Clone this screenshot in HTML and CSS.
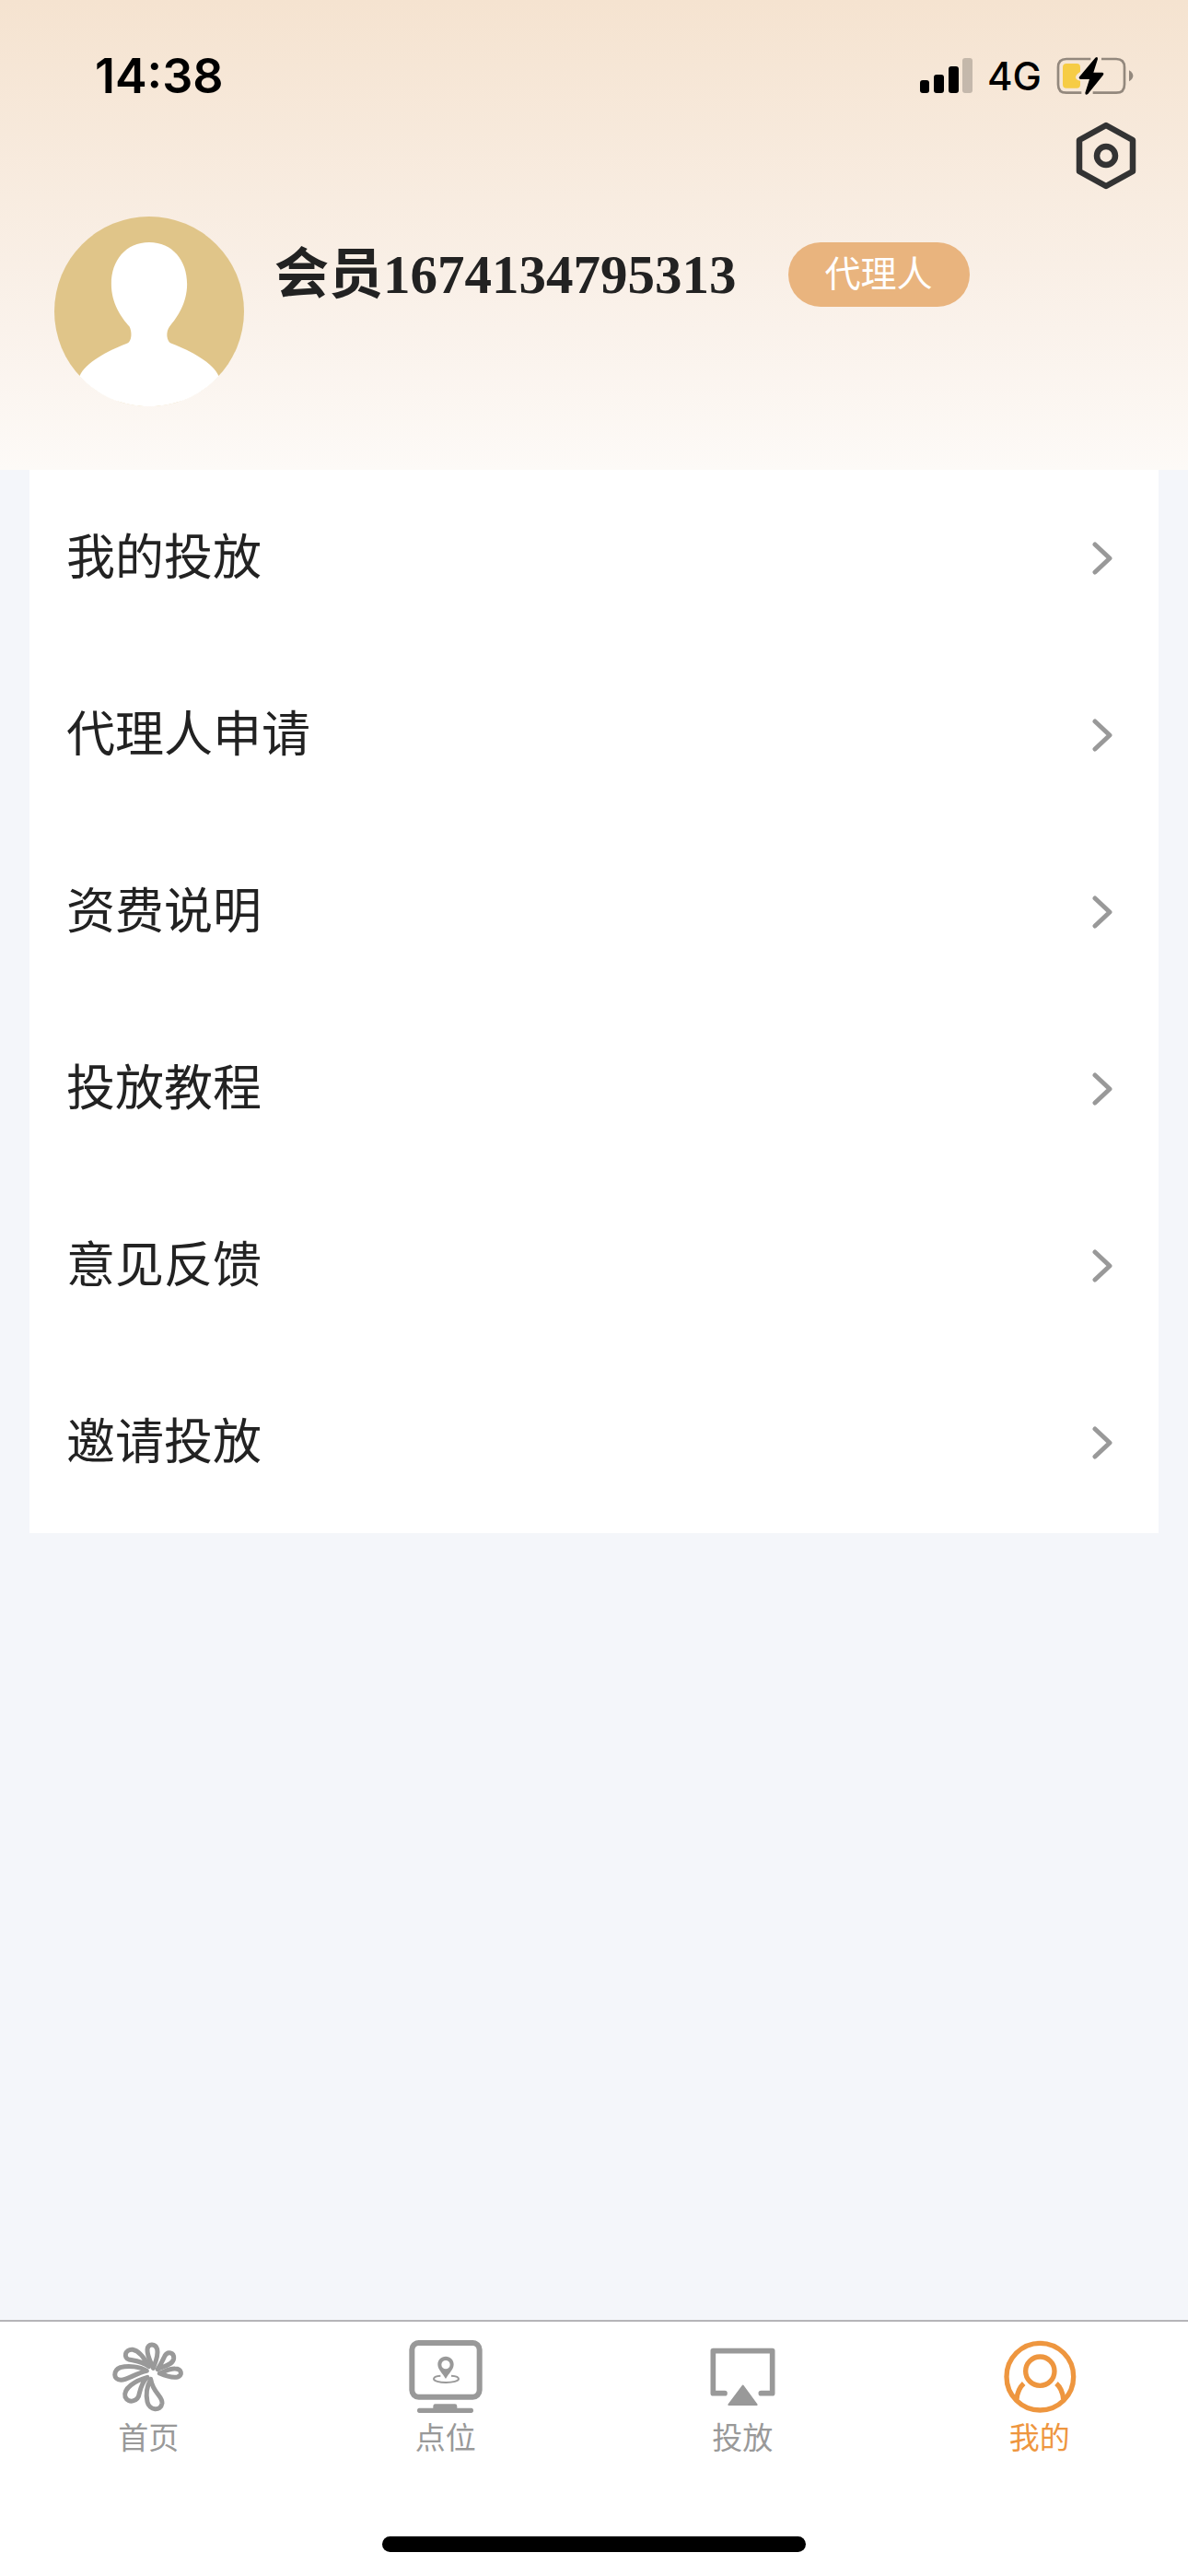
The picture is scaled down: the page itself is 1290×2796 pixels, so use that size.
FILE: index.html
```html
<!DOCTYPE html>
<html lang="zh-CN">
<head>
<meta charset="utf-8">
<meta name="viewport" content="width=device-width, initial-scale=1">
<title>我的</title>
<link rel="stylesheet" href="styles.css">
</head>
<body>
<header class="header">
  <div class="status">
    <time class="status-time">14:38</time>
    <div class="status-right">
      <svg class="signal" viewBox="0 0 57 38" aria-hidden="true">
        <rect x="0" y="24" width="10" height="14" rx="3"/>
        <rect x="15" y="18" width="11" height="20" rx="3"/>
        <rect x="31" y="9" width="11" height="29" rx="3"/>
        <rect x="46" y="0" width="11" height="38" rx="3" opacity=".2"/>
      </svg>
      <span class="network">4G</span>
      <svg class="battery" viewBox="501 61 252 126" aria-hidden="true">
        <path d="M613 70H534Q507 70 507 97V153Q507 180 534 180H583M648 70H696Q723 70 723 97V153Q723 180 696 180H620" fill="none" stroke="#93887d" stroke-width="8"/>
        <path d="M738 107Q751 114 751 125T738 143Z" fill="#93887d"/>
        <path d="M534 85H568Q579 85 579 97V112Q564 120 564 131Q566 140 579 141V153Q579 165 568 165H534Q522 165 522 153V97Q522 85 534 85Z" fill="#f6cc45"/>
        <path d="M628 66Q636 60 636 70L622 114H651Q658 116 653 123L604 184Q595 190 595 180L609 136H579Q572 133 577 127Z"/>
      </svg>
    </div>
  </div>
  <div class="toolbar">
    <button class="settings" type="button" aria-label="设置">
      <svg viewBox="0 0 66 74" fill="none" stroke="#333" stroke-width="6.5" stroke-linejoin="round" aria-hidden="true">
        <path d="M33 4L62 20V54L33 70L4 54V20Z"/>
        <circle cx="33" cy="37" r="10"/>
      </svg>
    </button>
  </div>
  <div class="profile">
    <svg class="avatar" viewBox="56 45 616 616" role="img" aria-label="头像">
      <circle cx="364" cy="353" r="308" fill="#e0c589"/>
      <path d="M364 129C440 129 487 188 487 264C487 325 456 372 430 402C418 418 418 450 438 458C500 482 572 520 590 563C534 625 455 661 364 661S194 625 138 563C156 520 228 482 290 458C310 450 308 418 300 402C272 372 241 325 241 264C241 188 288 129 364 129Z" fill="#fff"/>
    </svg>
    <div class="identity">
      <h1 class="name">会员1674134795313</h1>
      <span class="badge">代理人</span>
    </div>
  </div>
</header>

<main class="main">
  <nav class="menu" aria-label="菜单">
    <a class="menu-item" href="#placements">我的投放<svg class="chevron" viewBox="0 0 22 36" aria-hidden="true"><path d="M3 3L19 18L3 33"/></svg></a>
    <a class="menu-item" href="#apply">代理人申请<svg class="chevron" viewBox="0 0 22 36" aria-hidden="true"><path d="M3 3L19 18L3 33"/></svg></a>
    <a class="menu-item" href="#fees">资费说明<svg class="chevron" viewBox="0 0 22 36" aria-hidden="true"><path d="M3 3L19 18L3 33"/></svg></a>
    <a class="menu-item" href="#tutorial">投放教程<svg class="chevron" viewBox="0 0 22 36" aria-hidden="true"><path d="M3 3L19 18L3 33"/></svg></a>
    <a class="menu-item" href="#feedback">意见反馈<svg class="chevron" viewBox="0 0 22 36" aria-hidden="true"><path d="M3 3L19 18L3 33"/></svg></a>
    <a class="menu-item" href="#invite">邀请投放<svg class="chevron" viewBox="0 0 22 36" aria-hidden="true"><path d="M3 3L19 18L3 33"/></svg></a>
  </nav>
</main>

<footer class="footer">
  <nav class="tabs" aria-label="主导航">
    <a class="tab" href="#home">
      <svg class="tab-icon" viewBox="93 117 240 240" fill="none" stroke="currentColor" stroke-width="15" stroke-linejoin="round" aria-hidden="true">
        <path d="M229 208C222 190 209 170 210 147C211 128 236 126 242 146C247 168 236 190 229 208Z"/>
        <path d="M243 212C252 200 260 182 267 168C276 152 297 156 296 176C294 198 262 202 243 212Z"/>
        <path d="M250 225C266 220 280 209 300 210C322 210 326 232 308 237C288 241 266 232 250 225Z"/>
        <path d="M221 244C210 264 204 290 210 318C216 346 254 350 258 322C260 300 228 288 221 244Z"/>
        <path d="M210 238C196 250 190 264 184 290C180 318 148 324 138 302C130 274 172 248 210 238Z"/>
        <path d="M208 217C188 204 150 198 122 206C98 216 98 246 124 247C146 246 172 225 208 217Z"/>
        <path d="M215 203C206 186 186 152 162 148C136 146 132 176 150 180C172 184 194 186 215 203Z"/>
      </svg>
      首页
    </a>
    <a class="tab" href="#points">
      <svg class="tab-icon" viewBox="101 117 240 240" fill="none" stroke="currentColor" aria-hidden="true">
        <rect x="111" y="126" width="220" height="176" rx="22" stroke-width="18"/>
        <path d="M180 338V332Q180 325 187 325H251Q258 325 258 332V338H304Q311 338 311 346T304 354H135Q128 354 128 346T135 338Z" fill="currentColor" stroke="none"/>
        <path d="M221 170C206 170 195 181 195 196C195 213 210 224 221 243C232 224 247 213 247 196C247 181 236 170 221 170ZM221 183A14 14 0 1 1 221 211A14 14 0 1 1 221 183Z" fill="currentColor" fill-rule="evenodd" stroke="none"/>
        <path d="M204 233C188 234 182 238 182 243C182 250 200 255 222 255S263 250 263 243C263 238 256 234 239 233" stroke-width="6"/>
      </svg>
      点位
    </a>
    <a class="tab" href="#cast">
      <svg class="tab-icon" viewBox="109 117 240 240" fill="none" stroke="currentColor" stroke-linecap="round" stroke-linejoin="round" aria-hidden="true">
        <path d="M172 290H134V152H327V290H290" stroke-width="17"/>
        <path d="M231 266L276 327H185Z" fill="currentColor" stroke-width="6"/>
      </svg>
      投放
    </a>
    <a class="tab tab-active" href="#me" aria-current="page">
      <svg class="tab-icon" viewBox="118 117 240 240" fill="none" stroke="currentColor" stroke-width="16" aria-hidden="true">
        <circle cx="239" cy="236" r="109"/>
        <circle cx="239" cy="218" r="47"/>
        <path d="M186 258Q166 276 163 309M292 258Q312 276 315 309"/>
      </svg>
      我的
    </a>
  </nav>
  <div class="home-bar"></div>
</footer>
</body>
</html>
```
FILE: styles.css
```css
* {
  box-sizing: border-box;
}

body {
  display: flex;
  flex-direction: column;
  min-height: 100vh;
  margin: 0;
  background: #f4f6fa;
  color: #222;
  font-family: "Liberation Sans", "Noto Sans CJK SC", sans-serif;
}

svg {
  display: block;
}

a {
  color: inherit;
  text-decoration: none;
}

.header {
  padding-bottom: 69px;
  background: linear-gradient(#f5e3d0, #faf2eb 70%, #fdfaf7);
}

.status {
  display: flex;
  align-items: center;
  justify-content: space-between;
  height: 132px;
  padding: 32px 59px 0 103px;
  color: #000;
  font-family: Inter, sans-serif;
}

.status-time {
  font-size: 52px;
  font-weight: 600;
}

.status-right {
  display: flex;
  align-items: center;
  gap: 16px;
}

.signal {
  width: 57px;
  height: 38px;
}

.network {
  font-size: 42px;
  font-weight: 500;
}

.battery {
  width: 84px;
  height: 42px;
}

.toolbar {
  display: flex;
  justify-content: flex-end;
  padding: 0 56px;
}

.settings {
  width: 66px;
  height: 74px;
  padding: 0;
  border: 0;
  background: none;
}

.profile {
  display: flex;
  align-items: flex-start;
  gap: 33px;
  padding: 29px 59px 0;
}

.avatar {
  flex: none;
  width: 206px;
  height: 206px;
}

.identity {
  display: flex;
  align-items: center;
  gap: 56px;
  padding-top: 23px;
}

.name {
  margin: 0;
  font: bold 59px/80px "Liberation Serif", "Noto Sans CJK SC", serif;
}

.badge {
  padding: 0 40px;
  border-radius: 35px;
  background: #e9b47e;
  color: #fff;
  font-size: 39px;
  line-height: 70px;
}

.main {
  flex: 1;
  padding: 0 32px;
}

.menu {
  padding-bottom: 2px;
  background: #fff;
}

.menu-item {
  display: flex;
  align-items: center;
  justify-content: space-between;
  min-height: 192px;
  padding: 0 50px 0 40px;
  font-size: 53px;
  line-height: 80px;
}

.chevron {
  width: 22px;
  height: 36px;
  fill: none;
  stroke: #999;
  stroke-width: 5;
  stroke-linecap: round;
  stroke-linejoin: round;
}

.footer {
  padding-bottom: 26px;
  border-top: 2px solid #b5b5b8;
  background: #fff;
}

.tabs {
  display: grid;
  grid-template-columns: repeat(4, 1fr);
  padding: 20px 0 82px;
}

.tab {
  display: flex;
  flex-direction: column;
  align-items: center;
  gap: 3px;
  color: #999;
  font-size: 33px;
  line-height: 48px;
}

.tab-active {
  color: #ee963f;
}

.tab-icon {
  width: 80px;
  height: 80px;
}

.home-bar {
  width: 460px;
  max-width: 36%;
  height: 17px;
  margin: 0 auto;
  border-radius: 9px;
  background: #000;
}
```
